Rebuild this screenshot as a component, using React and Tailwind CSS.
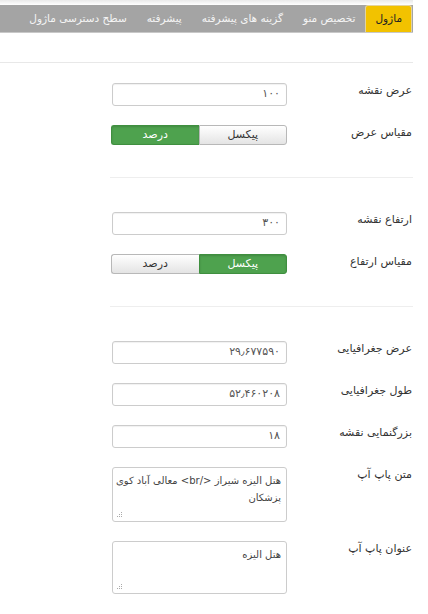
import React from "react";

const font = { fontFamily: '"DejaVu Sans", "Noto Sans", sans-serif' };

const tabs = ["ماژول", "تخصیص منو", "گزینه های پیشرفته", "پیشرفته", "سطح دسترسی ماژول"];

function Tabs() {
  return (
    <div className="flex h-[28px] items-stretch overflow-hidden whitespace-nowrap border-b border-[#c8c8c8] bg-[#a4a4a4]">
      {tabs.map((t, i) =>
        i === 0 ? (
          <div
            key={t}
            className="mr-[1px] flex items-center rounded-t-[3px] border border-b-0 border-[#e3d3a0] bg-[#f2c200] px-[9px] text-[10.5px] text-[#222]"
          >
            {t}
          </div>
        ) : (
          <div key={t} className="flex items-center px-[10px] text-[10.5px] text-[#f4f4f4]">
            {t}
          </div>
        )
      )}
    </div>
  );
}

function Row({ label, children, className = "" }) {
  return (
    <div className={`flex items-start ${className}`}>
      <div className="w-[126px] pr-[1px] text-[11px] leading-[16px] text-[#333]">{label}</div>
      <div className="w-[177px]">{children}</div>
    </div>
  );
}

function Input({ value }) {
  return (
    <div className="flex h-[23px] w-[175px] items-center rounded-[3px] border border-[#ccc] bg-white px-[6px] text-[11px] text-[#555] shadow-[inset_0_1px_1px_rgba(0,0,0,0.06)]">
      {value}
    </div>
  );
}

function Toggle({ active }) {
  const on = "bg-[#4ea24e] text-white border-[#3f8f3f] shadow-[inset_0_1px_2px_rgba(0,0,0,0.15)]";
  const off = "bg-gradient-to-b from-white to-[#e4e4e4] text-[#333] border-[#b8b8b8]";
  return (
    <div className="flex h-[20px] w-[176px] text-[11px]">
      <div
        className={`flex flex-1 items-center justify-center rounded-r-[3px] border ${active === "px" ? on : off}`}
      >
        پیکسل
      </div>
      <div
        className={`flex flex-1 items-center justify-center rounded-l-[3px] border border-r-0 ${active === "pct" ? on : off}`}
      >
        درصد
      </div>
    </div>
  );
}

function Grip() {
  return (
    <svg className="absolute bottom-[3px] left-[3px]" width="7" height="7" viewBox="0 0 7 7">
      {[
        [5, 1],
        [3, 3],
        [5, 3],
        [1, 5],
        [3, 5],
        [5, 5],
      ].map(([x, y]) => (
        <rect key={`${x}-${y}`} x={x} y={y} width="1" height="1" fill="#aaa" />
      ))}
    </svg>
  );
}

function TextArea({ lines, h }) {
  return (
    <div
      className={`relative w-[175px] rounded-[3px] border border-[#ccc] bg-white px-[5px] pt-[4px] text-[10px] leading-[17px] text-[#444] ${h}`}
    >
      {lines.map((l) => (
        <div key={l} className="whitespace-nowrap">
          {l}
        </div>
      ))}
      <Grip />
    </div>
  );
}

export default function App() {
  return (
    <div className="min-h-[614px] w-[428px] bg-white" style={font}>
      <div dir="rtl" className="w-[413px]">
        <div className="h-[5px] bg-gradient-to-b from-[#e9e9e9] to-white" />
        <Tabs />
        <div className="mt-[29px] h-px bg-[#e8e8e8]" />

        <Row label="عرض نقشه" className="mt-[20px]">
          <Input value="۱۰۰" />
        </Row>
        <Row label="مقیاس عرض" className="mt-[19px]">
          <Toggle active="pct" />
        </Row>
        <div className="mt-[32px] h-px w-[303px] bg-[#eee]" />

        <Row label="ارتفاع نقشه" className="mt-[34px]">
          <Input value="۳۰۰" />
        </Row>
        <Row label="مقیاس ارتفاع" className="mt-[19px]">
          <Toggle active="px" />
        </Row>
        <div className="mt-[32px] h-px w-[303px] bg-[#eee]" />

        <Row label="عرض جغرافیایی" className="mt-[34px]">
          <Input value="۲۹٫۶۷۷۵۹۰" />
        </Row>
        <Row label="طول جغرافیایی" className="mt-[19px]">
          <Input value="۵۲٫۴۶۰۲۰۸" />
        </Row>
        <Row label="بزرگنمایی نقشه" className="mt-[19px]">
          <Input value="۱۸" />
        </Row>
        <Row label="متن پاپ آپ" className="mt-[19px]">
          <TextArea lines={["هتل الیزه شیراز  </br> معالی آباد کوی", "پزشکان"]} h="h-[55px]" />
        </Row>
        <Row label="عنوان پاپ آپ" className="mt-[19px]">
          <TextArea lines={["هتل الیزه"]} h="h-[53px]" />
        </Row>
      </div>
    </div>
  );
}
